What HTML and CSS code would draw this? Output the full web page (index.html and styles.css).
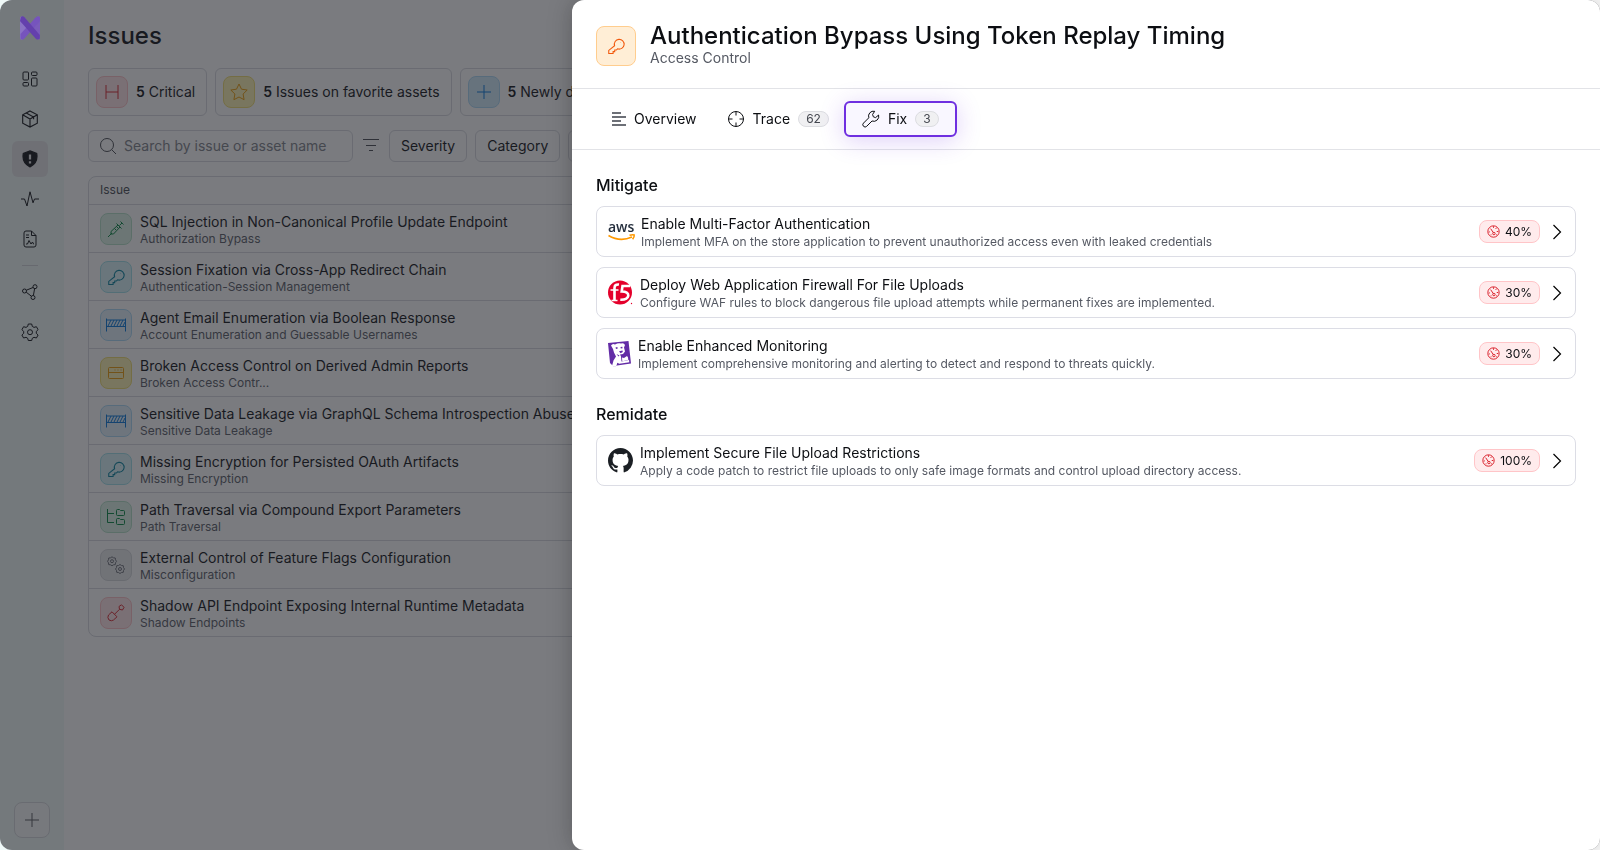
FILE: index.html
```html
<!DOCTYPE html>
<html lang="en">
<head>
    <meta charset="UTF-8">
    <meta name="viewport" content="width=device-width, initial-scale=1.0">
    <title>Issues</title>
    <link rel="stylesheet" href="styles.css">
</head>
<body>
    <!-- Shared icons -->
    <svg class="sprite" aria-hidden="true">
        <symbol id="key" viewBox="0 0 16 16"><path d="M6.2 7.3A4.6 4.6 0 1 1 9 10.2L7.9 11.300H6.300v1.500H4.800v1.700H.7v-2.800z"/><path d="M11.600 4.300h.2"/></symbol>
        <symbol id="fence" viewBox="0 0 20 16"><path d="M.5 1.500v13M19.500 1.500v13M.5 3h19M.5 9.500h19M2 9l3-6M5 9l3-6M8 9l3-6M11 9l3-6M14 9l3-6M17 9l2-4"/></symbol>
        <symbol id="gauge" viewBox="0 0 16 16"><circle cx="8" cy="8" r="7"/><circle cx="8.500" cy="10.500" r="1.500"/><path d="M4.500 4.500l3.200 4.800M8 1.500v2M11.700 3.300l-1 1.500M14 8h-2M2 8.500h1.500M4.500 12h1M11 12h1"/></symbol>
        <symbol id="chevron" viewBox="0 0 10 16"><path d="M1.500 1l7 7-7 7"/></symbol>
    </svg>

    <div class="app">
        <nav class="sidebar" aria-label="Main">
            <a href="#" class="logo" aria-label="Home">
                <svg viewBox="0 0 20 24" width="20" height="24">
                    <path fill="#8a72c4" d="M0 2.500Q0 0 2 .5L6 3V20L3.500 23Q0 25 0 21.500z"/>
                    <path fill="#7a5cba" d="M20 2.500Q20-.5 17 .7L14 3V20l3 3Q20 24.500 20 21.500z"/>
                    <path fill="#7654bd" d="M16 1.200Q18-.5 20 1.500V5L4 23Q1.500 24.500 .5 22.500V18z"/>
                    <path fill="#6440ad" d="M1 .7Q3-.3 4.500 1.200L19.800 19V22.500Q18 24.500 15.800 22.700L0 5z"/>
                </svg>
            </a>
            <a href="#" class="nav-item" aria-label="Dashboard"><svg viewBox="0 0 16 16" width="16" height="16"><rect x="1" y="1" width="5.500" height="8" rx="1"/><rect x="9.500" y="1" width="5.500" height="3.500" rx="1"/><rect x="1" y="11.500" width="5.500" height="3.500" rx="1"/><rect x="9.500" y="7" width="5.500" height="8" rx="1"/></svg></a>
            <a href="#" class="nav-item" aria-label="Assets"><svg viewBox="0 0 16 16" width="18" height="18"><path d="M8 .8l6.500 3.500v7.400L8 15.200l-6.500-3.500V4.300zM1.500 4.300L8 8l6.500-3.700M8 8v7.200M4.700 2.600l6.500 3.600v2"/></svg></a>
            <a href="#" class="nav-item active" aria-label="Issues"><svg viewBox="0 0 16 16" width="18" height="18"><path class="solid" d="M8 .8l6 2.300c.9 5-.8 9.300-6 11.900C2.800 12.400 1.100 8.100 2 3.100z"/><path class="mark" d="M8 4v4.500M8 10v2"/></svg></a>
            <a href="#" class="nav-item" aria-label="Activity"><svg viewBox="0 0 18 16" width="18" height="16"><path d="M0 8h3.500L6 15 9 .8l3 11L13.500 8H18"/></svg></a>
            <a href="#" class="nav-item" aria-label="Reports"><svg viewBox="0 0 14 18" width="14" height="18"><path d="M1 3Q1 1 3 1h5.500L13 5.500V15q0 2-2 2H3q-2 0-2-2zM8.500 1v4.500H13M3 5h3M3 7.500h3M3 14h1.500L6 10.500l2 3.500 1.500-2 1 2H11"/></svg></a>
            <hr>
            <a href="#" class="nav-item" aria-label="Graph"><svg viewBox="0 0 16 16" width="16" height="16"><circle cx="2.500" cy="7" r="2"/><circle cx="13" cy="2.700" r="2"/><circle cx="11" cy="13.500" r="2"/><path d="M4.400 6.200L11 3.500M4.200 8.200l5.200 4M12.600 4.700l-1.200 6.800"/></svg></a>
            <a href="#" class="nav-item" aria-label="Settings"><svg viewBox="0 0 18 18" width="18" height="18"><path d="M7.300 1h3.400l.6 2.400 1.700 1 2.400-.7 1.700 3L15.300 8.400v1.900l1.800 1.700-1.700 3-2.400-.7-1.700 1-.6 2.200H7.300l-.6-2.200-1.700-1-2.400.7-1.700-3 1.800-1.700V8.400L.9 6.700l1.700-3 2.400.7 1.700-1z"/><circle cx="9" cy="9.200" r="2.500"/></svg></a>
            <button class="add" aria-label="Add"><svg viewBox="0 0 14 14" width="14" height="14"><path d="M7 0v14M0 7h14"/></svg></button>
        </nav>

        <main class="issues">
            <h1>Issues</h1>
            <div class="stats">
                <button class="stat"><span class="tile red"><svg viewBox="0 0 14 16" width="14" height="16"><path d="M1 1v14M13 1v14M1 8h12"/></svg></span><span><b>5</b> Critical</span></button>
                <button class="stat"><span class="tile yellow"><svg viewBox="0 0 18 18" width="18" height="18"><path d="M9 1l2.500 5.200 5.700.8-4.100 4 1 5.700L9 14l-5.100 2.700 1-5.700L.8 7l5.700-.8z"/></svg></span><span><b>5</b> Issues on favorite assets</span></button>
                <button class="stat"><span class="tile blue"><svg viewBox="0 0 14 14" width="14" height="14"><path d="M7 0v14M0 7h14"/></svg></span><span><b>5</b> Newly discovered</span></button>
            </div>
            <div class="filters">
                <div class="search">
                    <svg viewBox="0 0 18 18" width="18" height="18"><circle cx="8" cy="8" r="6.500"/><path d="M12.700 12.700L17 17"/></svg>
                    <input type="text" aria-label="Search issues" placeholder="Search by issue or asset name">
                </div>
                <button class="sort" aria-label="Filter"><svg viewBox="0 0 16 12" width="16" height="12"><path d="M0 .5h16M3 6.500h10M6 11.500h4"/></svg></button>
                <button class="filter">Severity</button>
                <button class="filter">Category</button>
                <button class="filter">Status</button>
            </div>
            <div class="table-box">
                <table>
                    <thead>
                        <tr><th>Issue</th></tr>
                    </thead>
                    <tbody>
                        <tr><td><div class="issue"><span class="tile green"><svg viewBox="0 0 18 18" width="18" height="18"><path d="M1 17l4-4M13.500 1.500l3 3M15 3l-2.500 2.500M9.500 3.500l5 5M11 5L4 11.500V14h2.500L13 7M7.500 8.500L9 10M9.500 6.500L11 8"/></svg></span><div class="issue-text"><p class="name">SQL Injection in Non-Canonical Profile Update Endpoint</p><p class="kind">Authorization Bypass</p></div></div></td></tr>
                        <tr><td><div class="issue"><span class="tile teal"><svg width="17" height="17"><use href="#key"/></svg></span><div class="issue-text"><p class="name">Session Fixation via Cross-App Redirect Chain</p><p class="kind">Authentication-Session Management</p></div></div></td></tr>
                        <tr><td><div class="issue"><span class="tile blue pale"><svg width="20" height="16"><use href="#fence"/></svg></span><div class="issue-text"><p class="name">Agent Email Enumeration via Boolean Response</p><p class="kind">Account Enumeration and Guessable Usernames</p></div></div></td></tr>
                        <tr><td><div class="issue"><span class="tile yellow"><svg viewBox="0 0 16 12" width="16" height="12"><rect x=".5" y=".5" width="15" height="11" rx="1"/><path d="M.5 5.500h15M6.500 3h1M9.500 3h1M12.500 3h1"/></svg></span><div class="issue-text"><p class="name">Broken Access Control on Derived Admin Reports</p><p class="kind">Broken Access Contr...</p></div></div></td></tr>
                        <tr><td><div class="issue"><span class="tile blue pale"><svg width="20" height="16"><use href="#fence"/></svg></span><div class="issue-text"><p class="name">Sensitive Data Leakage via GraphQL Schema Introspection Abuse</p><p class="kind">Sensitive Data Leakage</p></div></div></td></tr>
                        <tr><td><div class="issue"><span class="tile teal"><svg width="17" height="17"><use href="#key"/></svg></span><div class="issue-text"><p class="name">Missing Encryption for Persisted OAuth Artifacts</p><p class="kind">Missing Encryption</p></div></div></td></tr>
                        <tr><td><div class="issue"><span class="tile green"><svg viewBox="0 0 18 16" width="18" height="16"><path d="M.5 0v13.500H7M.5 4.500H7M9.500 1.500Q9.500.5 10.500.5h2l1 1h3q1 0 1 1v3q0 1-1 1h-6q-1 0-1-1zM9.500 10.500q0-1 1-1h2l1 1h3q1 0 1 1v3q0 1-1 1h-6q-1 0-1-1z"/></svg></span><div class="issue-text"><p class="name">Path Traversal via Compound Export Parameters</p><p class="kind">Path Traversal</p></div></div></td></tr>
                        <tr><td><div class="issue"><span class="tile gray"><svg viewBox="0 0 18 18" width="18" height="18"><path d="M5 .8l1.500 1 1.800.2.200 1.800 1 1.500-1 1.500-.2 1.800-1.800.2-1.500 1-1.500-1L1.700 8.600 1.500 6.800.5 5.300l1-1.500L1.700 2l1.800-.2z"/><circle cx="5" cy="5.200" r="1.500"/><path d="M13 8.500l1.500 1 1.800.2.200 1.800 1 1.500-1 1.500-.2 1.800-1.800.2-1.500 1-1.500-1-1.800-.2-.2-1.800-1-1.500 1-1.500.2-1.800 1.800-.2z"/><circle cx="13" cy="13" r="1.500"/></svg></span><div class="issue-text"><p class="name">External Control of Feature Flags Configuration</p><p class="kind">Misconfiguration</p></div></div></td></tr>
                        <tr><td><div class="issue"><span class="tile red"><svg viewBox="0 0 18 18" width="18" height="18"><path d="M1.500 11L5 7.800l5 5L6.500 16Q4.500 17.500 2 16 0 13.500 1.500 11zM7.500 10.300l5-5"/><path d="M12.500 5.300L12 2.500 14.500.8 17 3.300 15.500 6z"/></svg></span><div class="issue-text"><p class="name">Shadow API Endpoint Exposing Internal Runtime Metadata</p><p class="kind">Shadow Endpoints</p></div></div></td></tr>
                    </tbody>
                </table>
            </div>
        </main>
    </div>

    <div class="overlay"></div>

    <section class="drawer" role="dialog" aria-labelledby="drawer-title">
        <header class="drawer-header">
            <span class="tile orange"><svg width="17" height="17"><use href="#key"/></svg></span>
            <div class="drawer-title">
                <h2 id="drawer-title">Authentication Bypass Using Token Replay Timing</h2>
                <p>Access Control</p>
            </div>
        </header>

        <div class="tabs" role="tablist">
            <button class="tab overview" role="tab"><svg viewBox="0 0 14 14" width="14" height="14"><path d="M0 1h9M0 5h14M0 9h9M0 13h14"/></svg>Overview</button>
            <button class="tab" role="tab"><svg viewBox="0 0 18 18" width="18" height="18"><circle cx="9" cy="9" r="7.500"/><path d="M9 1.500v4M9 12.500v4M1.500 9h4M12.500 9h4"/></svg>Trace <span class="count">62</span></button>
            <button class="tab selected" role="tab" aria-selected="true"><svg viewBox="0 0 18 18" width="18" height="18"><path d="M12.700 1.300A5 5 0 0 0 6.800 7.800L1.500 13.100a2.200 2.200 0 0 0 3.200 3.200L10 11a5 5 0 0 0 6.600-6l-3 2.600-2.300-.8-.7-2.400z"/></svg>Fix <span class="count">3</span></button>
        </div>

        <div class="fixes">
            <h3>Mitigate</h3>
            <a href="#" class="fix">
                <svg class="aws" viewBox="0 0 26 20" width="26" height="20"><text x="0" y="10">aws</text><path d="M.5 13.500Q12 20.500 24 15"/><path d="M21.500 13.300q3.500-1 4.700-.3.300 1.800-1.600 4.300"/></svg>
                <div class="fix-text"><p class="fix-name">Enable Multi-Factor Authentication</p><p class="fix-desc">Implement MFA on the store application to prevent unauthorized access even with leaked credentials</p></div>
                <span class="score"><svg width="13" height="13"><use href="#gauge"/></svg>40%</span>
                <svg class="chevron" width="10" height="16"><use href="#chevron"/></svg>
            </a>
            <a href="#" class="fix">
                <svg viewBox="0 0 25 25" width="25" height="25"><circle cx="12" cy="12.500" r="12" fill="#e4002b"/><path fill="none" stroke="#fff" stroke-width="2.600" d="M6.500 21V8Q6.500 4 11 4.500"/><path fill="none" stroke="#fff" stroke-width="1.600" d="M2.500 10h8M3.500 20.500h6"/><path fill="none" stroke="#fff" stroke-width="2.600" d="M22 6h-7.500l-.8 5.500q6.800 0 6.600 4.300-.8 4.200-8 4"/><circle cx="23.500" cy="23.500" r=".7" fill="#e4002b"/></svg>
                <div class="fix-text"><p class="fix-name">Deploy Web Application Firewall For File Uploads</p><p class="fix-desc">Configure WAF rules to block dangerous file upload attempts while permanent fixes are implemented.</p></div>
                <span class="score"><svg width="13" height="13"><use href="#gauge"/></svg>30%</span>
                <svg class="chevron" width="10" height="16"><use href="#chevron"/></svg>
            </a>
            <a href="#" class="fix">
                <svg viewBox="0 0 23 26" width="23" height="26"><path fill="#632ca6" d="M0 2L20.500 0 23 22.500 9 24.500 6 26 2 22z"/><path fill="#fff" d="M3 4.500Q4.500 2 7 3.500q3.500-2 6-1Q16 1.500 17 4L16 6.500l1 4-2 2.500-3 .5 1 2 .5 5 7.500-1.500.3 2.200-10 1.600-2-1-1 3.500-2.300.7-2-1 1.500-5.500 2.500-4L6 11.500 5 8z"/><path fill="#632ca6" d="M7.500 6.500l1.800-.5.500 1.600-1.800.4zM12.500 6l1.800-.3.300 1.500-1.800.3zM11 10.300l3.500-.7.300 1.400-2.300 1.200zM8.500 13l3 1.500-1 1z"/><path fill="#fff" d="M14 16.500l2 .5 3-2 1 1.500.3 2.500-6 1.200z"/></svg>
                <div class="fix-text"><p class="fix-name">Enable Enhanced Monitoring</p><p class="fix-desc">Implement comprehensive monitoring and alerting to detect and respond to threats quickly.</p></div>
                <span class="score"><svg width="13" height="13"><use href="#gauge"/></svg>30%</span>
                <svg class="chevron" width="10" height="16"><use href="#chevron"/></svg>
            </a>

            <h3>Remidate</h3>
            <a href="#" class="fix">
                <svg viewBox="0 0 16 16" width="25" height="25"><path fill="#1b1f24" d="M8 0C3.580 0 0 3.580 0 8c0 3.540 2.290 6.530 5.470 7.590.4.070.55-.17.55-.38 0-.19-.01-.82-.01-1.490-2.010.37-2.530-.49-2.690-.94-.09-.23-.48-.94-.82-1.130-.28-.15-.68-.52-.01-.53.63-.01 1.080.58 1.230.82.72 1.210 1.870.87 2.330.66.070-.52.28-.87.51-1.070-1.780-.2-3.640-.89-3.640-3.950 0-.87.31-1.590.82-2.150-.08-.2-.36-1.020.08-2.120 0 0 .67-.21 2.200.82.64-.18 1.320-.27 2-.27s1.360.09 2 .27c1.530-1.040 2.200-.82 2.200-.82.44 1.100.16 1.920.08 2.120.51.56.82 1.270.82 2.150 0 3.070-1.870 3.750-3.650 3.950.29.25.54.73.54 1.480 0 1.070-.01 1.930-.01 2.200 0 .21.15.46.55.38A8.010 8.010 0 0 0 16 8c0-4.420-3.580-8-8-8z"/></svg>
                <div class="fix-text"><p class="fix-name">Implement Secure File Upload Restrictions</p><p class="fix-desc">Apply a code patch to restrict file uploads to only safe image formats and control upload directory access.</p></div>
                <span class="score"><svg width="13" height="13"><use href="#gauge"/></svg>100%</span>
                <svg class="chevron" width="10" height="16"><use href="#chevron"/></svg>
            </a>
        </div>
    </section>
</body>
</html>
```
FILE: styles.css
```css
* {
    box-sizing: border-box;
}
body {
    font-family: Inter, sans-serif;
    font-size: 14px;
    line-height: 18px;
    margin: 0;
    color: #0c0e12;
    background: white;
}
h1, h2, h3, p {
    margin: 0;
}
button, input {
    font: inherit;
    color: inherit;
}
button {
    cursor: pointer;
}
a {
    color: inherit;
    text-decoration: none;
}
svg {
    fill: none;
    stroke: currentColor;
    flex: none;
}
.sprite {
    display: none;
}
.app {
    display: flex;
    height: 100vh;
    overflow: hidden;
    background: white;
}

/* Sidebar */
.sidebar {
    width: 64px;
    flex: none;
    display: flex;
    flex-direction: column;
    align-items: center;
    gap: 4px;
    padding: 16px 4px 12px 0;
    background: #eff9f8;
}
.logo {
    position: relative;
    z-index: 1;
    height: 24px;
    margin-bottom: 17px;
}
.logo svg {
    stroke: none;
}
.nav-item {
    width: 36px;
    height: 36px;
    display: flex;
    align-items: center;
    justify-content: center;
    border-radius: 6px;
}
.nav-item.active {
    background: #e4e4e6;
}
.nav-item .solid {
    fill: currentColor;
}
.nav-item .mark {
    stroke: #e4e4e6;
    stroke-width: 2;
}
.sidebar hr {
    width: 16px;
    margin: 4px 0;
    border: 0;
    border-top: 1px solid #cfd3d6;
}
.add {
    width: 36px;
    height: 36px;
    margin: auto 0 0 4px;
    padding: 0;
    display: flex;
    align-items: center;
    justify-content: center;
    border: 1px solid #d5d8db;
    border-radius: 8px;
    background: #f8f9fa;
    color: #55585d;
}

/* Issues list */
.issues {
    flex: 1;
    min-width: 0;
    padding: 20px 24px;
}
h1 {
    font-size: 24px;
    line-height: 32px;
    font-weight: 500;
    margin-bottom: 16px;
}
.stats {
    display: flex;
    gap: 8px;
    margin-bottom: 14px;
}
.stat {
    height: 48px;
    display: flex;
    align-items: center;
    gap: 8px;
    padding: 0 11px 0 7px;
    border: 1px solid #d6d8de;
    border-radius: 6px;
    background: none;
    white-space: nowrap;
}
.stat b {
    font-weight: 600;
}
.tile {
    width: 32px;
    height: 32px;
    flex: none;
    display: flex;
    align-items: center;
    justify-content: center;
    border: 1px solid;
    border-radius: 8px;
}
.tile.red {
    background: #ffe3e5;
    border-color: #fdbfc3;
}
.tile.yellow {
    background: #fdf3b0;
    border-color: #efdc6c;
}
.tile.blue {
    background: #d0eafb;
    border-color: #a9d8f5;
}
.tile.blue.pale {
    background: #e2f1fb;
}
.tile.green {
    background: #dcf3e6;
    border-color: #b2dfc6;
}
.tile.teal {
    background: #d6f3f8;
    border-color: #9ddfe9;
}
.tile.gray {
    background: #e9eaec;
    border-color: #d4d6da;
}
.tile.red svg {
    color: #d9202a;
}
.tile.yellow svg {
    color: #ec9a00;
}
.tile.blue svg {
    color: #0074da;
}
.tile.green svg {
    color: #00853f;
}
.tile.teal svg {
    color: #007f9c;
}
.tile.gray svg {
    color: #6b6f76;
}
.filters {
    display: flex;
    gap: 8px;
    margin-bottom: 14px;
}
.search {
    width: 265px;
    height: 32px;
    display: flex;
    align-items: center;
    gap: 7px;
    padding: 0 10px;
    border: 1px solid #d6d8de;
    border-radius: 6px;
    color: #44484e;
}
.search input {
    flex: 1;
    min-width: 0;
    height: 18px;
    border: 0;
    padding: 0;
    background: none;
}
.search input::placeholder {
    color: #7c8087;
    opacity: 1;
}
.sort {
    padding: 0 2px;
    border: 0;
    background: none;
    color: #44484e;
}
.filter {
    height: 32px;
    padding: 0 11px;
    border: 1px solid #d6d8de;
    border-radius: 6px;
    background: none;
}
.table-box {
    border: 1px solid #d6d8de;
    border-radius: 8px;
}
table {
    width: 100%;
    border-collapse: collapse;
}
th {
    height: 27px;
    padding: 0 11px;
    font-size: 12px;
    line-height: 16px;
    font-weight: 400;
    text-align: left;
    color: #44484e;
}
td {
    height: 48px;
    padding: 2px 11px 0;
    border-top: 1px solid #d6d8de;
}
.issue {
    display: flex;
    align-items: center;
    gap: 8px;
    white-space: nowrap;
}
.issue-text, .fix-text {
    padding-top: 2px;
}
.kind, .fix-desc {
    font-size: 12px;
    line-height: 16px;
    color: #555963;
}
.fix-desc {
    line-height: 18px;
}
.overlay {
    position: fixed;
    inset: 0;
    border-radius: 12px;
    background: rgba(33, 35, 42, 0.6);
}

/* Drawer */
.drawer {
    position: fixed;
    z-index: 2;
    top: 0;
    right: 0;
    bottom: 0;
    left: 572px;
    border-radius: 12px;
    background: white;
    box-shadow: 0 0 24px rgba(0, 0, 0, 0.25);
    overflow: auto;
}
.drawer-header {
    height: 89px;
    display: flex;
    align-items: center;
    gap: 14px;
    padding: 4px 24px 0;
    border-bottom: 1px solid #e2e3e7;
}
.drawer-title {
    padding-bottom: 4px;
}
.drawer-title h2 {
    font-size: 24px;
    line-height: 28px;
    font-weight: 500;
}
.drawer-title p {
    line-height: 16px;
    color: #555963;
}
.tile.orange {
    width: 40px;
    height: 40px;
    background: #ffeed6;
    border-color: #ffcd8e;
    color: #f2590d;
}
.tabs {
    height: 61px;
    display: flex;
    align-items: center;
    padding: 0 25px;
    border-bottom: 1px solid #e2e3e7;
}
.tab {
    height: 36px;
    display: flex;
    align-items: center;
    gap: 8px;
    padding: 0 15px;
    border: 0;
    border-radius: 6px;
    background: none;
}
.overview svg {
    color: #6d7077;
    stroke-width: 2;
}
.tab.selected {
    padding: 0 16px;
    border: 2px solid #6f2fe0;
    background: #f9f7ff;
    box-shadow: 0 4px 24px rgba(111, 47, 224, 0.22);
}
.count {
    height: 16px;
    padding: 0 7px;
    border: 1px solid #dcdde1;
    border-radius: 8px;
    background: #f0f0f2;
    font-size: 12px;
    line-height: 14px;
    color: #44474f;
}
.fixes {
    display: flex;
    flex-direction: column;
    gap: 10px;
    padding: 24px;
}
.fixes h3 {
    font-size: 16px;
    line-height: 22px;
    font-weight: 500;
}
.fix + h3 {
    margin-top: 14px;
}
.fix {
    height: 51px;
    display: flex;
    align-items: center;
    gap: 7px;
    padding: 0 13px 0 11px;
    border: 1px solid #dcdde5;
    border-radius: 8px;
}
.fix > svg {
    stroke: none;
}
.fix-text {
    flex: 1;
    min-width: 0;
}
.aws {
    overflow: visible;
}
.aws text {
    font: 600 14px "Open Sans", sans-serif;
    fill: #252f3e;
}
.fix .aws path {
    stroke: #ff9900;
    stroke-width: 1.6;
}
.score {
    height: 23px;
    display: flex;
    align-items: center;
    gap: 5px;
    padding: 0 7px;
    border: 1px solid #ffc5c8;
    border-radius: 8px;
    background: #ffebec;
    font-size: 12px;
}
.score svg {
    color: #d9202a;
    stroke-width: 1.2;
}
.fix .chevron {
    margin-left: 5px;
    stroke: black;
    stroke-width: 1.2;
}
```
